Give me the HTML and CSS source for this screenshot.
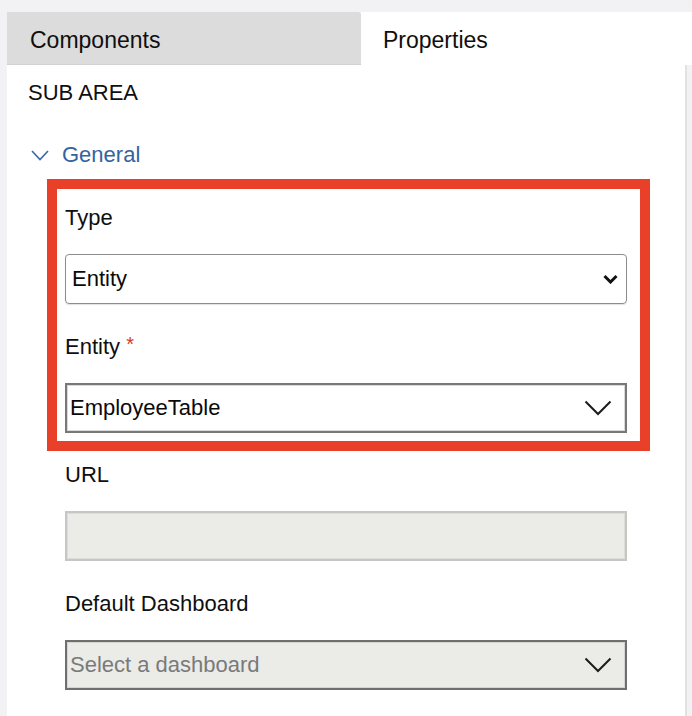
FILE: index.html
```html
<!DOCTYPE html>
<html lang="en">
<head>
<meta charset="utf-8">
<title>Sub Area Properties</title>
<link rel="stylesheet" href="styles.css">
</head>
<body>
<div class="app">
  <div class="tabs">
    <div class="tab tab-inactive">Components</div>
    <div class="tab tab-active">Properties</div>
  </div>
  <div class="panel">
    <div class="section-title">SUB AREA</div>
    <div class="group-header">
      <svg class="group-chevron" width="18" height="11" viewBox="0 0 18 11"><polyline points="1,1 9,9.5 17,1" fill="none" stroke="#3b67a3" stroke-width="1.6"/></svg>
      <span class="group-title">General</span>
    </div>
    <div class="fields">
      <div class="highlight">
        <div class="label label-first">Type</div>
        <div class="control control-rounded">
          <span class="control-text">Entity</span>
          <svg class="chev-bold" width="15" height="10" viewBox="0 0 15 10"><polyline points="1.5,2 7.5,8 13.5,2" fill="none" stroke="#111" stroke-width="3"/></svg>
        </div>
        <div class="label">Entity <span class="req">*</span></div>
        <div class="control control-square">
          <span class="control-text control-text-tight">EmployeeTable</span>
          <svg class="chev-thin" width="28" height="16" viewBox="0 0 28 16"><polyline points="1.5,1.5 14,14 26.5,1.5" fill="none" stroke="#1c1c1c" stroke-width="2"/></svg>
        </div>
      </div>
      <div class="label label-after-box">URL</div>
      <div class="control control-disabled"></div>
      <div class="label">Default Dashboard</div>
      <div class="control control-disabled-select">
        <span class="control-text control-text-tight placeholder">Select a dashboard</span>
        <svg class="chev-thin" width="28" height="16" viewBox="0 0 28 16"><polyline points="1.5,1.5 14,14 26.5,1.5" fill="none" stroke="#1c1c1c" stroke-width="2"/></svg>
      </div>
    </div>
  </div>
</div>
</body>
</html>
```

FILE: styles.css
```css
html, body {
  margin: 0;
  padding: 0;
}
body {
  width: 692px;
  height: 716px;
  overflow: hidden;
  background: #f2f2f4;
  font-family: "Liberation Sans", Arial, sans-serif;
  color: #0f0f0f;
}
.app {
  padding-top: 12px;
  padding-left: 7px;
  height: 704px;
  display: flex;
  flex-direction: column;
}
.tabs {
  display: flex;
  height: 53px;
}
.tab {
  font-size: 23px;
  line-height: 53px;
  padding-top: 2px;
  box-sizing: border-box;
}
.tab-inactive {
  width: 354px;
  background: #dcdcdc;
  padding-left: 23px;
  border-top-right-radius: 3px;
  border-bottom: 1px solid #d2d2d2;
}
.tab-active {
  flex: 1;
  background: #fff;
  padding-left: 22px;
}
.panel {
  flex: 1;
  background: #fff;
  margin-right: 5px;
  border-right: 2px solid #e2e2e4;
}
.section-title {
  font-size: 22px;
  line-height: 28px;
  padding-top: 14px;
  padding-left: 21px;
}
.group-header {
  display: flex;
  align-items: center;
  margin-top: 34px;
  height: 28px;
  padding-left: 24px;
}
.group-chevron {
  display: block;
  margin-right: 13px;
}
.group-title {
  font-size: 22px;
  color: #33649f;
}
.fields {
  padding-left: 58px;
  width: 562px;
}
.highlight {
  margin: 10px -23px 0 -18px;
  border: 10px solid #e9402a;
  padding: 15px 13px 8px 8px;
}
.label {
  font-size: 22px;
  line-height: 28px;
  margin-top: 29px;
}
.label-first {
  margin-top: 0;
}
.label-after-box {
  margin-top: 10px;
}
.label-wide {
  letter-spacing: 0.3px;
}
.req {
  color: #d13a2f;
  font-size: 20px;
  position: relative;
  top: -3px;
}
.control {
  margin-top: 22px;
  height: 50px;
  box-sizing: border-box;
  display: flex;
  align-items: center;
  justify-content: space-between;
  font-size: 22px;
}
.control-rounded {
  border: 1.5px solid #8d8d8d;
  border-radius: 4px;
  box-shadow: 0 1px 1px rgba(0, 0, 0, 0.12);
  padding: 0 8px 0 6px;
}
.control-square {
  border: 2px solid #787878;
  box-shadow: inset 0 0 0 1px #d9d9d9;
  padding: 0 13px 0 2px;
}
.control-disabled {
  background: #ebebe8;
  border: 2px solid #c6c6c4;
  box-shadow: inset 0 0 0 1px #dcdcd9;
}
.control-disabled-select {
  background: #ebebe8;
  border: 2px solid #6f6f6f;
  box-shadow: inset 0 0 0 1px #d4d4d1;
  padding: 0 13px 0 2px;
}
.control-text {
  color: #0a0a0a;
}
.control-text-tight {
  padding-left: 1px;
}
.placeholder {
  color: #7a7a7a;
}
.chev-bold, .chev-thin {
  display: block;
}
```
